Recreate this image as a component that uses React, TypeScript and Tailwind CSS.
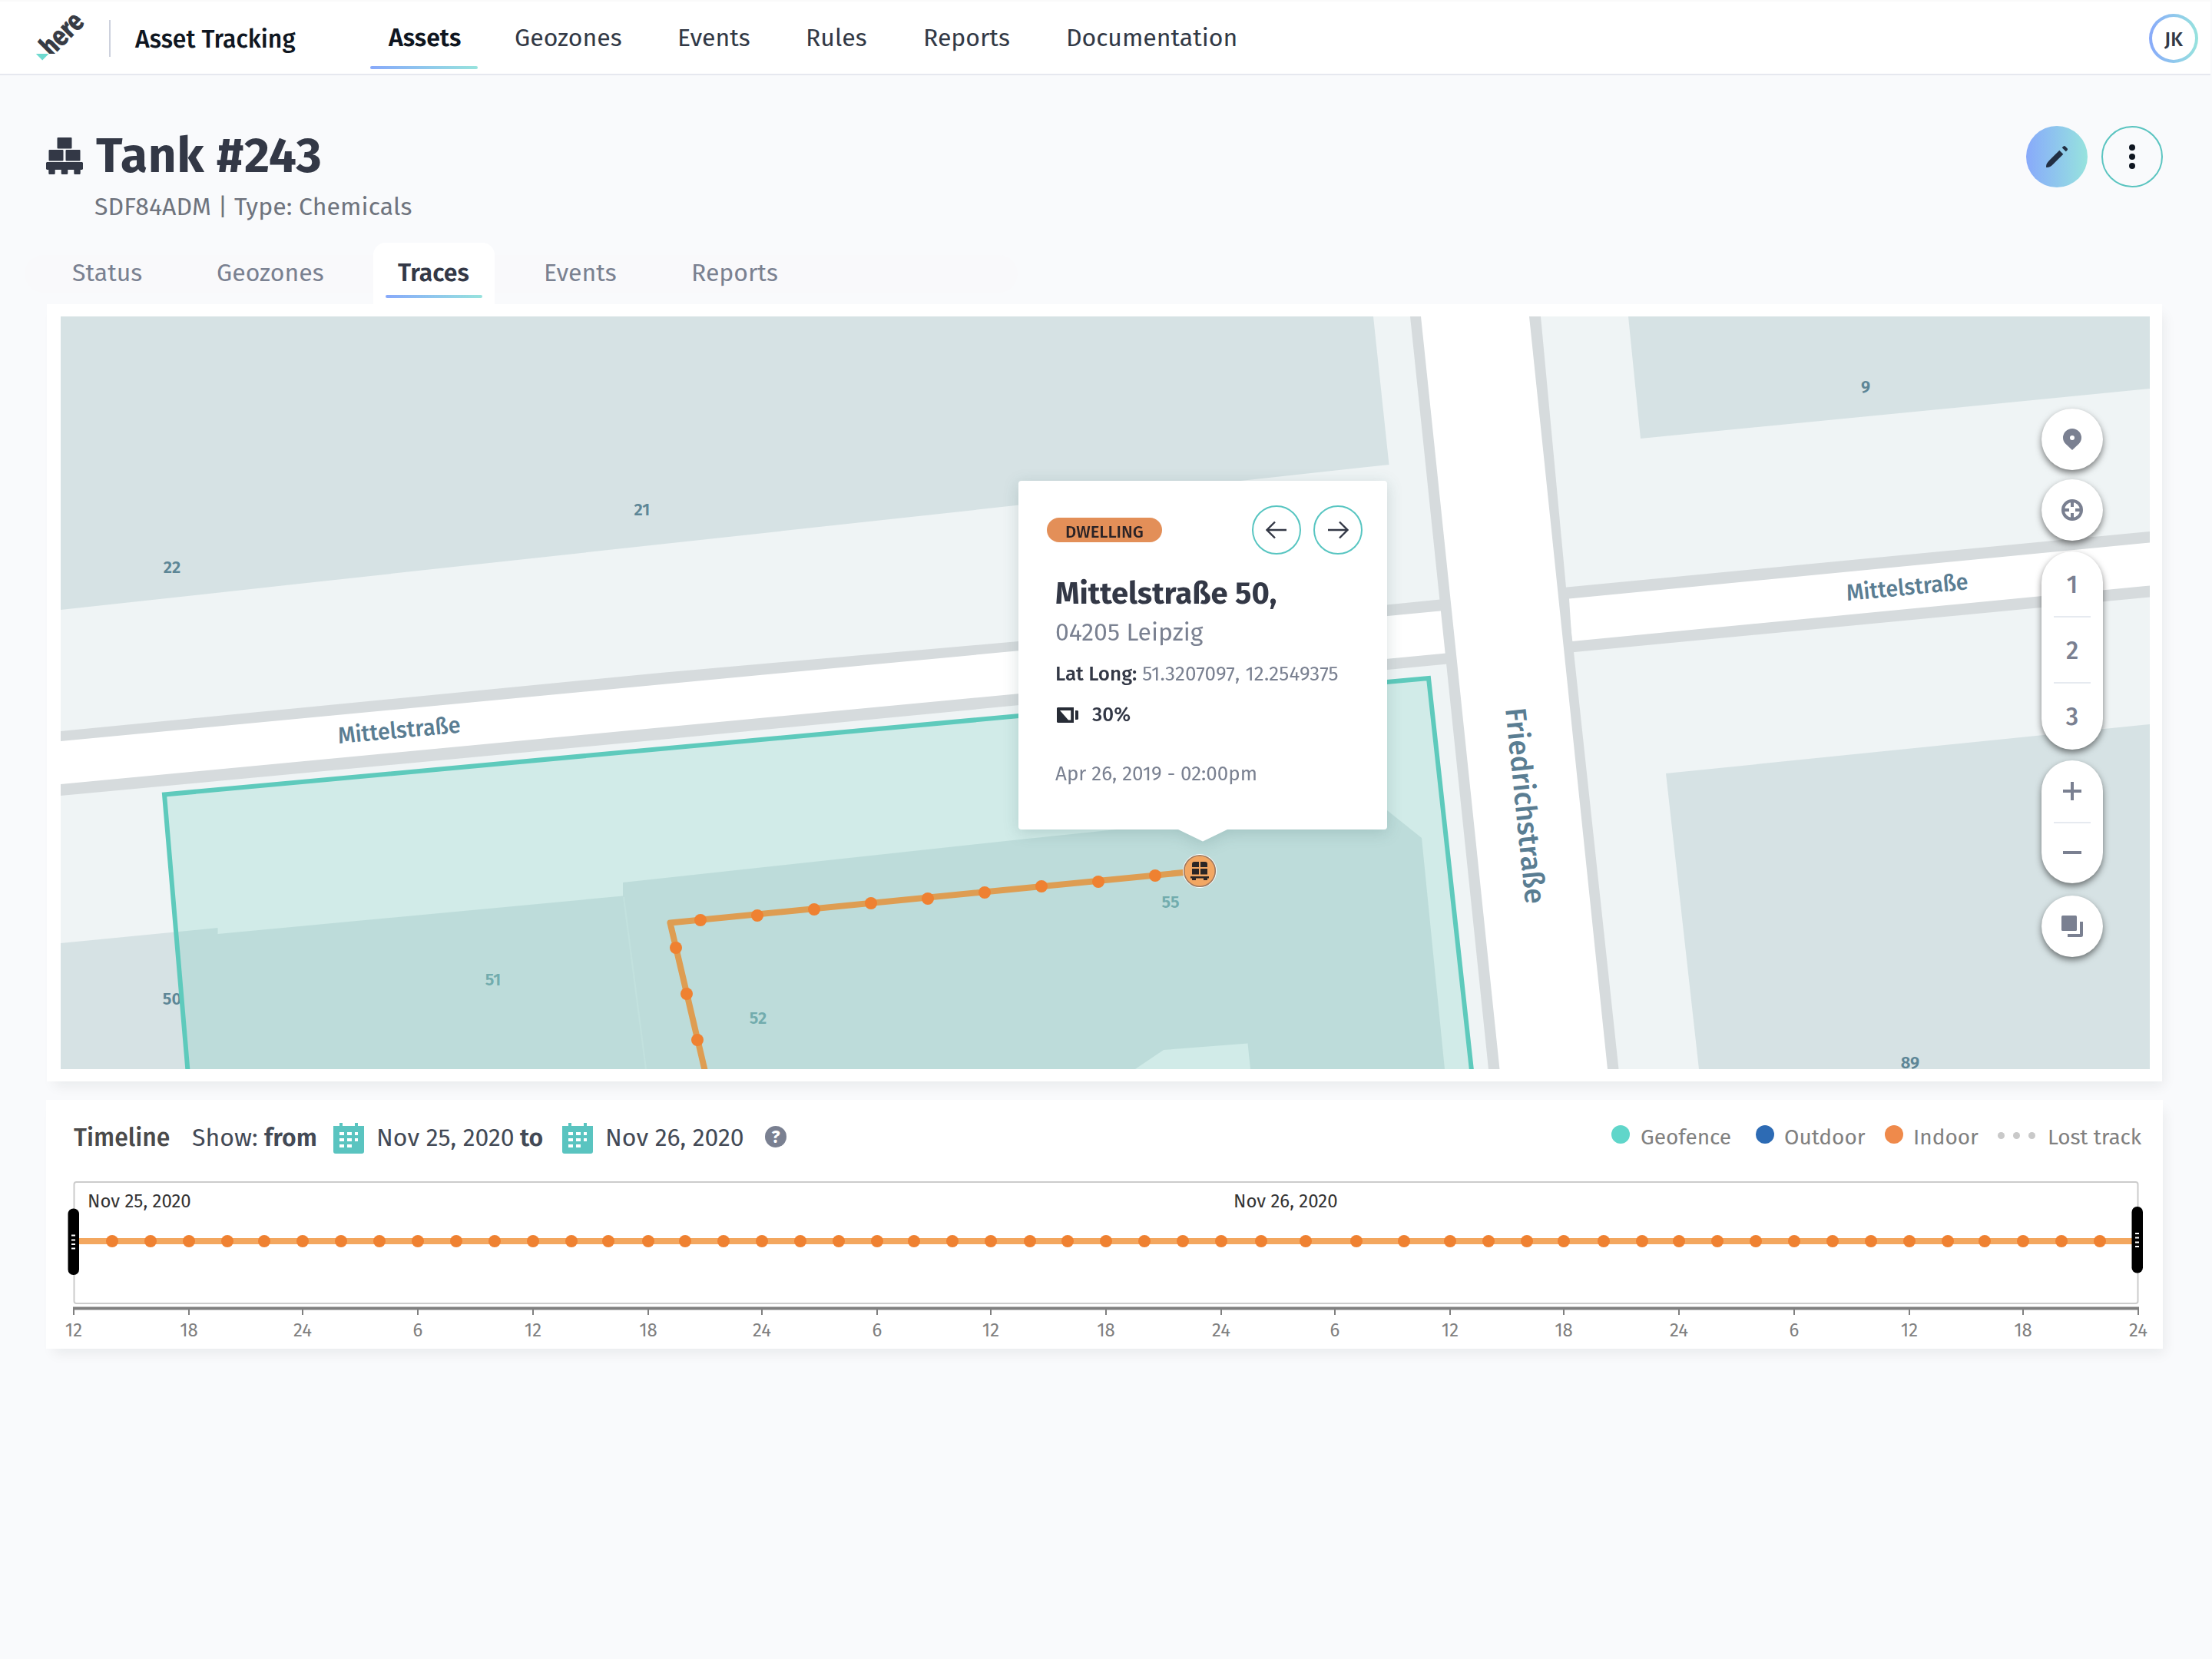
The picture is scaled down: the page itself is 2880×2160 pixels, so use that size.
import React from 'react';

const NAV = [
  { label: 'Geozones', cls: 'w-[212px]' },
  { label: 'Events', cls: 'w-[167px]' },
  { label: 'Rules', cls: 'w-[153px]' },
  { label: 'Reports', cls: 'w-[186px]' },
  { label: 'Documentation', cls: 'w-[260px]' },
];

const TICKS = [96, 246, 394, 544, 694, 844, 992, 1142, 1290, 1440, 1590, 1738, 1888, 2036, 2186, 2336, 2486, 2634, 2784];
const HOURS = [12, 18, 24, 6];
const POINTS = [
  146, 196, 246, 296, 344, 394, 444, 494, 544, 594, 644, 694, 744, 792, 844, 892, 942, 992, 1042, 1092, 1142, 1190, 1240,
  1290, 1341, 1390, 1440, 1490, 1540, 1590, 1642, 1700, 1766, 1828, 1888, 1938, 1988, 2036, 2088, 2138, 2186, 2236, 2286,
  2336, 2386, 2436, 2486, 2536, 2584, 2634, 2684, 2734,
];
const TRAIL = [
  [912, 1198], [986, 1192], [1060, 1184], [1134, 1176], [1208, 1170], [1282, 1162], [1356, 1154], [1430, 1148], [1504, 1140],
  [880, 1234], [894, 1294], [908, 1354],
];

function Logo() {
  return (
    <svg className="h-[80px] w-[80px] shrink-0" viewBox="40 8 80 80">
      <text transform="translate(67 75) rotate(-45)" fontSize="37" fontWeight="800" textLength="63" lengthAdjust="spacingAndGlyphs" fill="#383c45">
        here
      </text>
      <rect x="40" y="70" width="60" height="16" fill="#fff" />
      <path d="M46.800 70H63.500L55.200 78.500Z" fill="#6fdacf" />
    </svg>
  );
}

function Header() {
  return (
    <header className="mr-[2px] flex h-[98px] border-b-2 border-[#e6e8ef] border-t-2 border-t-[#fafafa] bg-white">
      <div className="mt-[6px] ml-[40px]">
        <Logo />
      </div>
      <div className="mt-[24px] ml-[22px] h-[48px] w-[2px] bg-[#cdd1dd]" />
      <div className="mt-[3px] ml-[32px] h-[90px] w-[306px] text-[32px] font-medium leading-[93px] text-[#0f1621]">Asset Tracking</div>
      <div className="flex h-[88px] w-[140px] flex-col justify-between">
        <div className="h-[84px] pl-[24px] text-[32px] font-semibold leading-[95px] text-[#0f1621]">Assets</div>
        <div className="h-[4px] w-[140px] shrink-0 rounded-full bg-linear-to-r from-[#88a9fa] to-[#97e3dd]" />
      </div>
      <nav className="ml-[48px] flex text-[32px] leading-[95px] text-[#323946]">
        {NAV.map((n) => (
          <div key={n.label} className={n.cls}>{n.label}</div>
        ))}
      </nav>
      <div className="mt-[16px] mr-[16px] ml-auto h-[64px] w-[64px] rounded-full bg-linear-to-r from-[#88a9fa] to-[#97e3dd] p-[4px]">
        <div className="flex h-full w-full items-center justify-center rounded-full bg-white pt-[3px] text-[26px] font-medium text-[#323946]">JK</div>
      </div>
    </header>
  );
}

function PalletIcon() {
  return (
    <svg className="h-[48px] w-[48px]" viewBox="0 0 48 48" fill="#333846">
      <rect x="14.500" y="0" width="19" height="14.500" rx="1" />
      <rect x="3.500" y="16" width="19" height="14.500" rx="1" />
      <rect x="25.500" y="16" width="19" height="14.500" rx="1" />
      <path d="M1 32H47L48 33V41L47 42H44.700V47L44 48H37L36.300 47V42H28.300V47L27.500 48H20.500L19.700 47V42H11.700V47L11 48H4L3.300 47V42H1L0 41V33Z" />
    </svg>
  );
}

function TitleBar() {
  return (
    <div className="flex justify-between pt-[66px] pr-[64px] pl-[60px]">
      <div className="h-[120px]">
        <div className="flex h-[77px] items-center">
          <PalletIcon />
          <h1 className="ml-[17px] text-[64px] font-bold leading-[72px] tracking-[0.6px] text-[#333846]">Tank #243</h1>
        </div>
        <div className="mt-[12px] pl-[63px] text-[32px] leading-[32px] tracking-[0.08px] text-[#6f747e]">SDF84ADM | Type: Chemicals</div>
      </div>
      <div className="flex gap-[18px]">
        <button className="flex h-[80px] w-[80px] items-center justify-center rounded-full bg-linear-to-r from-[#88a9fa] to-[#97e3dd]">
          <svg className="h-[28px] w-[28px]" viewBox="0 0 28 28" fill="#222f43">
            <path d="M17.300 5.700L22.300 10.700L9 24C6.500 26.500 4 28 1 28C0 28 0 27.500 0 27C0 24 1.500 21.500 4 19Z" />
            <path d="M20.700 2.300L22.300 0.700C23.200 -0.200 24.300 -0.200 25.200 0.700L27.400 3C28.300 4 28.200 5 27.300 5.800L25.800 7.300Z" />
          </svg>
        </button>
        <button className="flex h-[80px] w-[80px] flex-col items-center justify-center gap-[4px] rounded-full border-2 border-[#5ac4c0]">
          <span className="h-[8px] w-[8px] rounded-full bg-[#0f1621]" />
          <span className="h-[8px] w-[8px] rounded-full bg-[#0f1621]" />
          <span className="h-[8px] w-[8px] rounded-full bg-[#0f1621]" />
        </button>
      </div>
    </div>
  );
}

function Tabs() {
  return (
    <div className="relative mt-[32px] flex h-[80px] pl-[94px] text-[32px] leading-[79px] text-[#7a8191]">
      <div className="absolute top-[16px] left-[32px] h-[49px] w-[1293px] rounded-full bg-[#f9f9fb]" />
      <div className="relative w-[188px]">Status</div>
      <div className="relative w-[204px]">Geozones</div>
      <div className="relative flex w-[158px] flex-col rounded-t-[16px] bg-white">
        <div className="h-[68px] pl-[32px] font-semibold text-[#333846]">Traces</div>
        <div className="ml-[16px] h-[4px] w-[126px] rounded-full bg-linear-to-r from-[#88a9fa] to-[#97e3dd]" />
      </div>
      <div className="relative ml-[64px] w-[192px]">Events</div>
      <div className="relative">Reports</div>
    </div>
  );
}

function MapDrawing() {
  return (
    <svg className="h-[980px] w-[2720px]" viewBox="79 412 2720 980">
      <rect x="79" y="412" width="2720" height="980" fill="#eff4f5" />
      <g fill="#d6e2e4">
        <path d="M79 412H1788L1808.500 605L79 794Z" />
        <path d="M2120 412H2799V506L2136 571Z" />
        <path d="M2169 1007L2799 943V1392H2212Z" />
        <path d="M79 1228L283.500 1208V1216L811 1166.500V1149L1328 1093L1790 1045L1806 1055L1851 1091L1881 1392H79Z" />
      </g>
      <path d="M1478 1392L1515 1367L1624.500 1358.500L1628 1392Z" fill="#eff4f5" />
      <path d="M812 1168L841 1392" stroke="#dde8e9" strokeWidth="2" />
      <path d="M79 952L860 876L1326 835L1880 780L1890 864L860 963L79 1036Z" fill="#d6dbdd" />
      <path d="M79 965L1880 795L1888 850L79 1021Z" fill="#fff" />
      <path d="M2035 765L2799 692V777.500L2045 849.500Z" fill="#d6dbdd" />
      <path d="M2043 779.500L2799 706.500V762.500L2046.600 835Z" fill="#fff" />
      <path d="M1836 412L2006 412L2039 765L2049 849L2107.500 1392H1938Z" fill="#d6dbdd" />
      <path d="M1850 412H1991L2093 1392H1952.500Z" fill="#fff" />
      <g fill="#5d8696" fontSize="22" fontWeight="600" textAnchor="middle">
        <text x="836" y="671">21</text>
        <text x="224" y="746">22</text>
        <text x="2429" y="511">9</text>
        <text x="2487" y="1391">89</text>
        <text x="224" y="1308">50</text>
      </g>
      <g fill="#78a5ac" fontSize="22" fontWeight="600" textAnchor="middle">
        <text x="642" y="1283">51</text>
        <text x="987" y="1333">52</text>
        <text x="1524" y="1182">55</text>
      </g>
      <g fill="#5a7d92" fontWeight="500">
        <text transform="translate(441 968) rotate(-5.200)" fontSize="30" textLength="160" lengthAdjust="spacingAndGlyphs">Mittelstraße</text>
        <text transform="translate(2405 782) rotate(-5.400)" fontSize="30" textLength="159" lengthAdjust="spacingAndGlyphs">Mittelstraße</text>
        <text transform="translate(1960 923) rotate(84.100)" fontSize="38" textLength="256" lengthAdjust="spacingAndGlyphs">Friedrichstraße</text>
      </g>
      <path d="M246 1412L214 1034.500L1860 883L1918 1412Z" fill="#58c8b6" fillOpacity="0.2" stroke="#5ecabc" strokeWidth="6" />
      <path d="M1561 1134L872.500 1201.500L922 1412" fill="none" stroke="#de9d52" strokeWidth="8" strokeLinejoin="round" />
      {TRAIL.map(([x, y]) => (
        <circle key={x} cx={x} cy={y} r="8" fill="#ef8131" />
      ))}
      <circle cx="1562" cy="1134" r="22" fill="#fff" />
      <circle cx="1562" cy="1134" r="20.300" fill="#f2a763" stroke="#9e7a60" strokeWidth="1.600" />
      <g fill="#2b2626">
        <path d="M1552 1129V1125Q1552 1122 1555 1122H1561V1129Z" />
        <path d="M1563 1129V1122H1569Q1572 1122 1572 1125V1129Z" />
        <rect x="1552" y="1131" width="9" height="7.500" />
        <rect x="1563" y="1131" width="9" height="7.500" />
        <path d="M1550 1141H1574V1143.500H1572V1146H1567V1143.500H1557V1146H1552V1143.500H1550Z" />
      </g>
    </svg>
  );
}

function RoundArrow({ d }: { d: string }) {
  return (
    <button className="flex h-[64px] w-[64px] items-center justify-center rounded-full border-2 border-[#57c5c1]">
      <svg className="h-[28px] w-[28px]" viewBox="0 0 28 28" fill="none" stroke="#333846" strokeWidth="2.400">
        <path d={d} />
      </svg>
    </button>
  );
}

function Popup() {
  return (
    <div className="absolute top-[214px] left-[1247px] h-[454px] w-[480px] rounded-[4px] bg-white drop-shadow-[0_4px_10px_rgba(15,60,60,0.16)]">
      <div className="flex h-[96px] items-end">
        <div className="mb-[16px] ml-[37px] h-[32px] w-[150px] rounded-full bg-[#e38f58] pt-[3px] pl-[24px] text-[22px] font-medium leading-[31px] text-[#2b2326]">DWELLING</div>
        <div className="ml-[117px] flex gap-[16px]">
          <RoundArrow d="M27 14H1.500M12 3.500L1.500 14L12 24.500" />
          <RoundArrow d="M1 14H26.500M16 3.500L26.500 14L16 24.500" />
        </div>
      </div>
      <div className="pl-[48px]">
        <div className="mt-[26px] h-[50px] text-[40px] font-bold leading-[50px] text-[#333846]">Mittelstraße 50,</div>
        <div className="mt-[5px] h-[40px] text-[32px] leading-[40px] text-[#7a8191]">04205 Leipzig</div>
        <div className="mt-[19px] h-[32px] text-[26px] leading-[32px] text-[#7a8191]">
          <span className="font-medium text-[#333846]">Lat Long:</span> <span className="tracking-[0.15px]">51.3207097, 12.2549375</span>
        </div>
        <div className="mt-[20px] flex h-[34px] items-center gap-[18px] text-[26px] font-medium leading-[34px] text-[#333846]">
          <svg className="mb-[1px] ml-[2px] h-[20px] w-[28px]" viewBox="0 0 28 20" fill="#272c36">
            <path fillRule="evenodd" d="M0 1L1 0H22V20H1L0 19ZM4 4L15 16.500H18.200V4Z" />
            <path d="M24 4H27L28 5V15L27 16H24Z" />
          </svg>
          30%
        </div>
        <div className="mt-[42px] h-[36px] text-[26px] leading-[36px] text-[#7a8191]">Apr 26, 2019 - 02:00pm</div>
      </div>
      <svg className="absolute top-[453px] left-[208px] h-[17px] w-[64px]" viewBox="0 0 64 17">
        <path d="M0 1V0H64V1L32 16.500Z" fill="#fff" />
      </svg>
    </div>
  );
}

function MapControls() {
  return (
    <div className="absolute top-[120px] left-[2579px] flex w-[80px] flex-col text-[#7a8091]">
      <button className="flex h-[80px] w-[80px] items-center justify-center rounded-full bg-white shadow-[0_4px_8px_rgba(0,0,0,0.5)]">
        <svg className="h-[28px] w-[24px]" viewBox="0 0 24 28" fill="currentColor">
          <path fillRule="evenodd" d="M12 28L3.500 20C1.200 17.800 0 15 0 12A12 12 0 0 1 24 12C24 15 22.800 17.800 20.500 20ZM12 9A3 3 0 1 0 12 15A3 3 0 1 0 12 9Z" />
        </svg>
      </button>
      <button className="mt-[12px] flex h-[80px] w-[80px] items-center justify-center rounded-full bg-white shadow-[0_4px_8px_rgba(0,0,0,0.5)]">
        <svg className="h-[28px] w-[28px]" viewBox="0 0 28 28" fill="none" stroke="currentColor" strokeWidth="4">
          <circle cx="14" cy="14" r="12" />
          <path d="M14 2V10M14 18V26M2 14H10M18 14H26" />
        </svg>
      </button>
      <div className="mt-[14px] flex h-[258px] w-[80px] flex-col items-center rounded-full bg-white text-[32px] font-medium shadow-[0_4px_8px_rgba(0,0,0,0.5)]">
        <div className="h-[84px] leading-[87px]">1</div>
        <div className="h-[2px] w-[48px] bg-[#e6eaf0]" />
        <div className="h-[84px] leading-[87px]">2</div>
        <div className="h-[2px] w-[48px] bg-[#e6eaf0]" />
        <div className="h-[84px] leading-[87px]">3</div>
      </div>
      <div className="mt-[14px] flex h-[160px] w-[80px] flex-col items-center rounded-full bg-white pt-[28px] shadow-[0_4px_8px_rgba(0,0,0,0.5)]">
        <svg className="h-[24px] w-[24px]" viewBox="0 0 24 24" stroke="currentColor" strokeWidth="4">
          <path d="M12 0V24M0 12H24" />
        </svg>
        <div className="mt-[28px] h-[2px] w-[48px] bg-[#e6eaf0]" />
        <div className="mt-[36px] h-[4px] w-[24px] bg-[#7a8091]" />
      </div>
      <button className="mt-[16px] flex h-[80px] w-[80px] items-center justify-center rounded-full bg-white shadow-[0_4px_8px_rgba(0,0,0,0.5)]">
        <svg className="h-[28px] w-[28px]" viewBox="0 0 28 28" fill="currentColor">
          <rect x="0" y="0" width="20" height="20" rx="1.500" />
          <path d="M24 8H28V25.500Q28 28 25.500 28H8V24H24Z" />
        </svg>
      </button>
    </div>
  );
}

function Calendar() {
  return (
    <svg className="mt-[2px] h-[40px] w-[40px] shrink-0" viewBox="0 0 40 40" fill="#5ac4c0">
      <path fillRule="evenodd" d="M0 4H8V0H12V4H28V0H32V4H40V37Q40 40 37 40H3Q0 40 0 37ZM8 12V16H14V12ZM18 12V16H24V12ZM28 12V16H32V12ZM8 20V24H14V20ZM18 20V24H24V20ZM28 20V24H32V20ZM8 28V32H14V28ZM18 28V32H24V28Z" />
    </svg>
  );
}

function TimelineChart() {
  return (
    <svg className="h-[255px] w-[2756px] overflow-visible" viewBox="60 1501 2756 255">
      <rect x="96.500" y="1539" width="2687" height="158" rx="3" fill="none" stroke="#ccc" strokeWidth="2" />
      <g fontSize="24" fill="#333">
        <text x="114" y="1572">Nov 25, 2020</text>
        <text x="1606" y="1572">Nov 26, 2020</text>
      </g>
      <rect x="96" y="1612" width="2688" height="8" fill="#f3a75f" />
      {POINTS.map((x) => (
        <circle key={x} cx={x} cy="1616" r="8" fill="#ef8131" />
      ))}
      <rect x="95" y="1701.500" width="2690" height="4" fill="#808080" />
      {TICKS.map((x, i) => (
        <g key={x}>
          <rect x={x - 1} y="1704" width="2" height="8" fill="#808080" />
          <text x={x} y="1740" fontSize="24" textAnchor="middle" fill="#808080">
            {HOURS[i < 3 ? i : i % 4]}
          </text>
        </g>
      ))}
      <rect x="88.500" y="1573.500" width="14.500" height="86.500" rx="7" fill="#000" />
      <rect x="2775.500" y="1571" width="14.500" height="86.500" rx="7" fill="#000" />
      <g stroke="#fff" strokeWidth="2">
        <path d="M93 1608.500H98M93 1614.500H98M93 1620H98M93 1625.500H98" />
        <path d="M2780 1606H2785M2780 1611.500H2785M2780 1617.500H2785M2780 1623H2785" />
      </g>
    </svg>
  );
}

function Timeline() {
  return (
    <section className="mt-[24px] ml-[60px] h-[324px] w-[2756px] bg-white pt-[29px] shadow-[6px_10px_16px_-4px_rgba(15,22,33,0.07)]">
      <div className="flex h-[40px] items-center pl-[36px] text-[32px] leading-[40px] text-[#434a56]">
        <div className="w-[154px] font-medium text-[#4a4a4a]">Timeline</div>
        <div className="w-[94px]">Show:</div>
        <div className="w-[90px] font-semibold">from</div>
        <Calendar />
        <div className="ml-[16px] w-[187px]">Nov 25, 2020</div>
        <div className="w-[55px] font-semibold">to</div>
        <Calendar />
        <div className="ml-[16px] w-[208px]">Nov 26, 2020</div>
        <div className="mb-[2px] flex h-[28px] w-[28px] items-center justify-center rounded-full bg-[#7a8091] text-[23px] font-bold leading-none text-white">?</div>
        <div className="ml-auto flex h-[40px] items-center text-[28px] text-[#808080]">
          <div className="mb-[8px] h-[24px] w-[24px] rounded-full bg-[#60d6ca]" />
          <div className="ml-[14px] w-[150px]">Geofence</div>
          <div className="mb-[8px] h-[24px] w-[24px] rounded-full bg-[#2d6bb4]" />
          <div className="ml-[13px] w-[131px]">Outdoor</div>
          <div className="mb-[8px] h-[24px] w-[24px] rounded-full bg-[#ef8a4b]" />
          <div className="ml-[13px] w-[110px]">Indoor</div>
          <div className="mb-[6px] flex w-[65px] gap-[11px]">
            <span className="h-[9px] w-[9px] rounded-full bg-[#c9c9c9]" />
            <span className="h-[9px] w-[9px] rounded-full bg-[#c9c9c9]" />
            <span className="h-[9px] w-[9px] rounded-full bg-[#c9c9c9]" />
          </div>
          <div className="w-[150px] tracking-[-0.1px]">Lost track</div>
        </div>
      </div>
      <TimelineChart />
    </section>
  );
}

export default function App() {
  return (
    <div className="h-[2160px] w-[2880px] overflow-hidden whitespace-nowrap bg-[#f9fafc] font-['Fira_Sans','Noto_Sans',sans-serif]">
      <Header />
      <TitleBar />
      <Tabs />
      <section className="relative ml-[61px] h-[1012px] w-[2754px] bg-white pt-[16px] pl-[18px] shadow-[6px_10px_16px_-4px_rgba(15,22,33,0.07)]">
        <div className="relative h-[980px] w-[2720px]">
          <MapDrawing />
          <Popup />
          <MapControls />
        </div>
      </section>
      <Timeline />
    </div>
  );
}
